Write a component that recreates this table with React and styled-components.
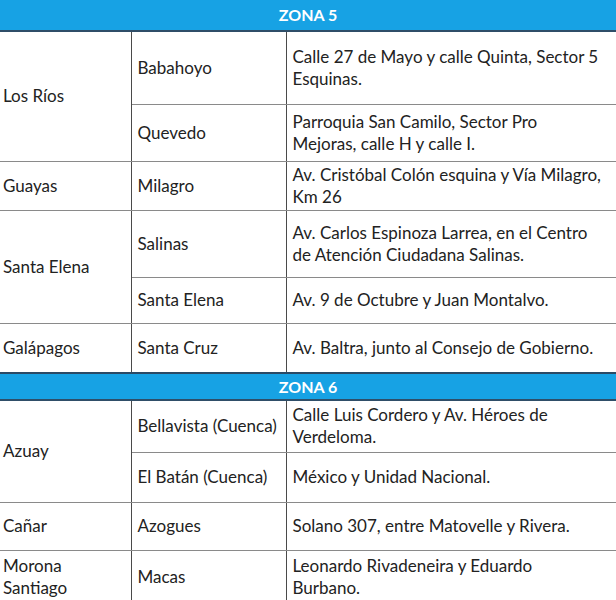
import React from 'react';
import styled, { createGlobalStyle } from 'styled-components';

const GlobalStyle = createGlobalStyle`
  html, body {
    margin: 0;
    padding: 0;
    background: #ffffff;
  }
  body {
    font-family: Lato, "Open Sans", sans-serif;
    color: #222222;
  }
`;

const Table = styled.table`
  width: 616px;
  border-collapse: collapse;
  table-layout: fixed;
  font-size: 17px;
  line-height: 22px;
`;

const ZoneRow = styled.tr`
  height: ${p => p.$h}px;
  background: #17a2e4;
`;

const ZoneCell = styled.td`
  color: #ffffff;
  font-weight: 700;
  font-size: 16px;
  text-align: center;
  padding: 0;
  border-top: ${p => (p.$top ? '2px solid #2a4a66' : 'none')};
  border-bottom: 2px solid #2f4e68;
`;

const Row = styled.tr`
  height: ${p => p.$h}px;
`;

const Cell = styled.td`
  padding: 0 ${p => (p.$first ? 3 : 6)}px;
  vertical-align: middle;
  border-top: 1px solid #8a8a8a;
  border-bottom: 1px solid #8a8a8a;
  border-right: ${p => (p.$last ? 'none' : '1px solid #4a4a4a')};
`;

const Line = styled.span`
  display: block;
  white-space: nowrap;
`;

const zones = [
  {
    name: 'ZONA 5',
    h: 31,
    provinces: [
      {
        name: ['Los Ríos'],
        sites: [
          { city: 'Babahoyo', addr: ['Calle 27 de Mayo y calle Quinta, Sector 5', 'Esquinas.'], h: 73 },
          { city: 'Quevedo', addr: ['Parroquia San Camilo, Sector Pro', 'Mejoras, calle H y calle I.'], h: 57 },
        ],
      },
      { name: ['Guayas'], sites: [{ city: 'Milagro', addr: ['Av. Cristóbal Colón esquina y Vía Milagro,', 'Km 26'], h: 49 }] },
      {
        name: ['Santa Elena'],
        sites: [
          { city: 'Salinas', addr: ['Av. Carlos Espinoza Larrea, en el Centro', 'de Atención Ciudadana Salinas.'], h: 67 },
          { city: 'Santa Elena', addr: ['Av. 9 de Octubre y Juan Montalvo.'], h: 46 },
        ],
      },
      { name: ['Galápagos'], sites: [{ city: 'Santa Cruz', addr: ['Av. Baltra, junto al Consejo de Gobierno.'], h: 50 }] },
    ],
  },
  {
    name: 'ZONA 6',
    h: 27,
    provinces: [
      {
        name: ['Azuay'],
        sites: [
          { city: 'Bellavista (Cuenca)', addr: ['Calle Luis Cordero y Av. Héroes de', 'Verdeloma.'], h: 52 },
          { city: 'El Batán (Cuenca)', addr: ['México y Unidad Nacional.'], h: 50 },
        ],
      },
      { name: ['Cañar'], sites: [{ city: 'Azogues', addr: ['Solano 307, entre Matovelle y Rivera.'], h: 48 }] },
      { name: ['Morona', 'Santiago'], sites: [{ city: 'Macas', addr: ['Leonardo Rivadeneira y Eduardo', 'Burbano.'], h: 54 }] },
    ],
  },
];

const Lines = ({ items }) => items.map(t => <Line key={t}>{t}</Line>);

export default function App() {
  return (
    <>
      <GlobalStyle />
      <Table>
        <colgroup>
          <col style={{ width: 131 }} />
          <col style={{ width: 155 }} />
          <col />
        </colgroup>
        <tbody>
          {zones.map((zone, zi) => (
            <React.Fragment key={zone.name}>
              <ZoneRow $h={zone.h}>
                <ZoneCell colSpan={3} $top={zi > 0}>{zone.name}</ZoneCell>
              </ZoneRow>
              {zone.provinces.map(prov =>
                prov.sites.map((site, i) => (
                  <Row key={site.city} $h={site.h}>
                    {i === 0 && (
                      <Cell $first rowSpan={prov.sites.length}>
                        <Lines items={prov.name} />
                      </Cell>
                    )}
                    <Cell>{site.city}</Cell>
                    <Cell $last>
                      <Lines items={site.addr} />
                    </Cell>
                  </Row>
                ))
              )}
            </React.Fragment>
          ))}
        </tbody>
      </Table>
    </>
  );
}
